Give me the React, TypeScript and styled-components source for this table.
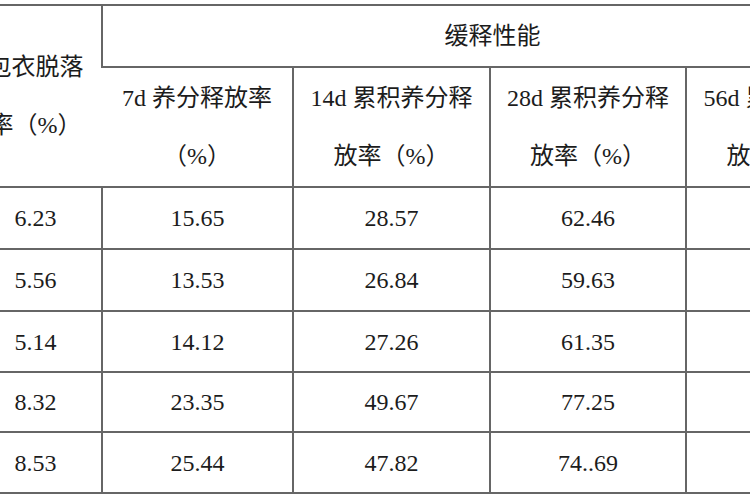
import React from 'react';
import styled, { createGlobalStyle } from 'styled-components';

const GlobalStyle = createGlobalStyle`
  html, body {
    margin: 0;
    padding: 0;
    background: #ffffff;
  }
`;

const Viewport = styled.div`
  width: 750px;
  height: 500px;
  overflow: hidden;
  background: #ffffff;
  padding-top: 4px;
  box-sizing: border-box;
`;

// the screenshot is a crop of a wider table, so the first column starts off-screen
const Table = styled.table`
  margin-left: -30px;
  border-collapse: collapse;
  table-layout: fixed;
  width: 912px;
  font-family: "Liberation Serif", "Noto Sans CJK SC", serif;
  font-size: 24px;
  color: #1c1c1c;
`;

const Row = styled.tr<{ $height: number }>`
  height: ${(p) => p.$height}px;
`;

const Cell = styled.td`
  border-top: 2px solid #666666;
  border-bottom: 2px solid #666666;
  border-left: 2px solid #666666;
  padding: 0;
  text-align: center;
  vertical-align: middle;
  white-space: nowrap;
  line-height: 28px;

  &:first-child {
    border-left: none;
  }
`;

const HeadCell = styled(Cell)`
  line-height: 58px;
`;

const columnWidths = [132, 191, 197, 196, 196];

const rows = [
  ['6.23', '15.65', '28.57', '62.46', ''],
  ['5.56', '13.53', '26.84', '59.63', ''],
  ['5.14', '14.12', '27.26', '61.35', ''],
  ['8.32', '23.35', '49.67', '77.25', ''],
  ['8.53', '25.44', '47.82', '74..69', ''],
];

const rowHeights = [62, 62, 61, 60, 61];

export default function App(): React.ReactElement {
  return (
    <Viewport>
      <GlobalStyle />
      <Table>
        <colgroup>
          {columnWidths.map((w, i) => (
            <col key={i} style={{ width: w }} />
          ))}
        </colgroup>
        <thead>
          <Row $height={62}>
            <HeadCell rowSpan={2}>
              包衣脱落
              <br />
              率（%）
            </HeadCell>
            <Cell colSpan={4}>缓释性能</Cell>
          </Row>
          <Row $height={120}>
            <HeadCell>
              7d 养分释放率
              <br />
              （%）
            </HeadCell>
            <HeadCell>
              14d 累积养分释
              <br />
              放率（%）
            </HeadCell>
            <HeadCell>
              28d 累积养分释
              <br />
              放率（%）
            </HeadCell>
            <HeadCell>
              56d 累积养分释
              <br />
              放率（%）
            </HeadCell>
          </Row>
        </thead>
        <tbody>
          {rows.map((row, r) => (
            <Row key={r} $height={rowHeights[r]}>
              {row.map((value, c) => (
                <Cell key={c}>{value}</Cell>
              ))}
            </Row>
          ))}
        </tbody>
      </Table>
    </Viewport>
  );
}
